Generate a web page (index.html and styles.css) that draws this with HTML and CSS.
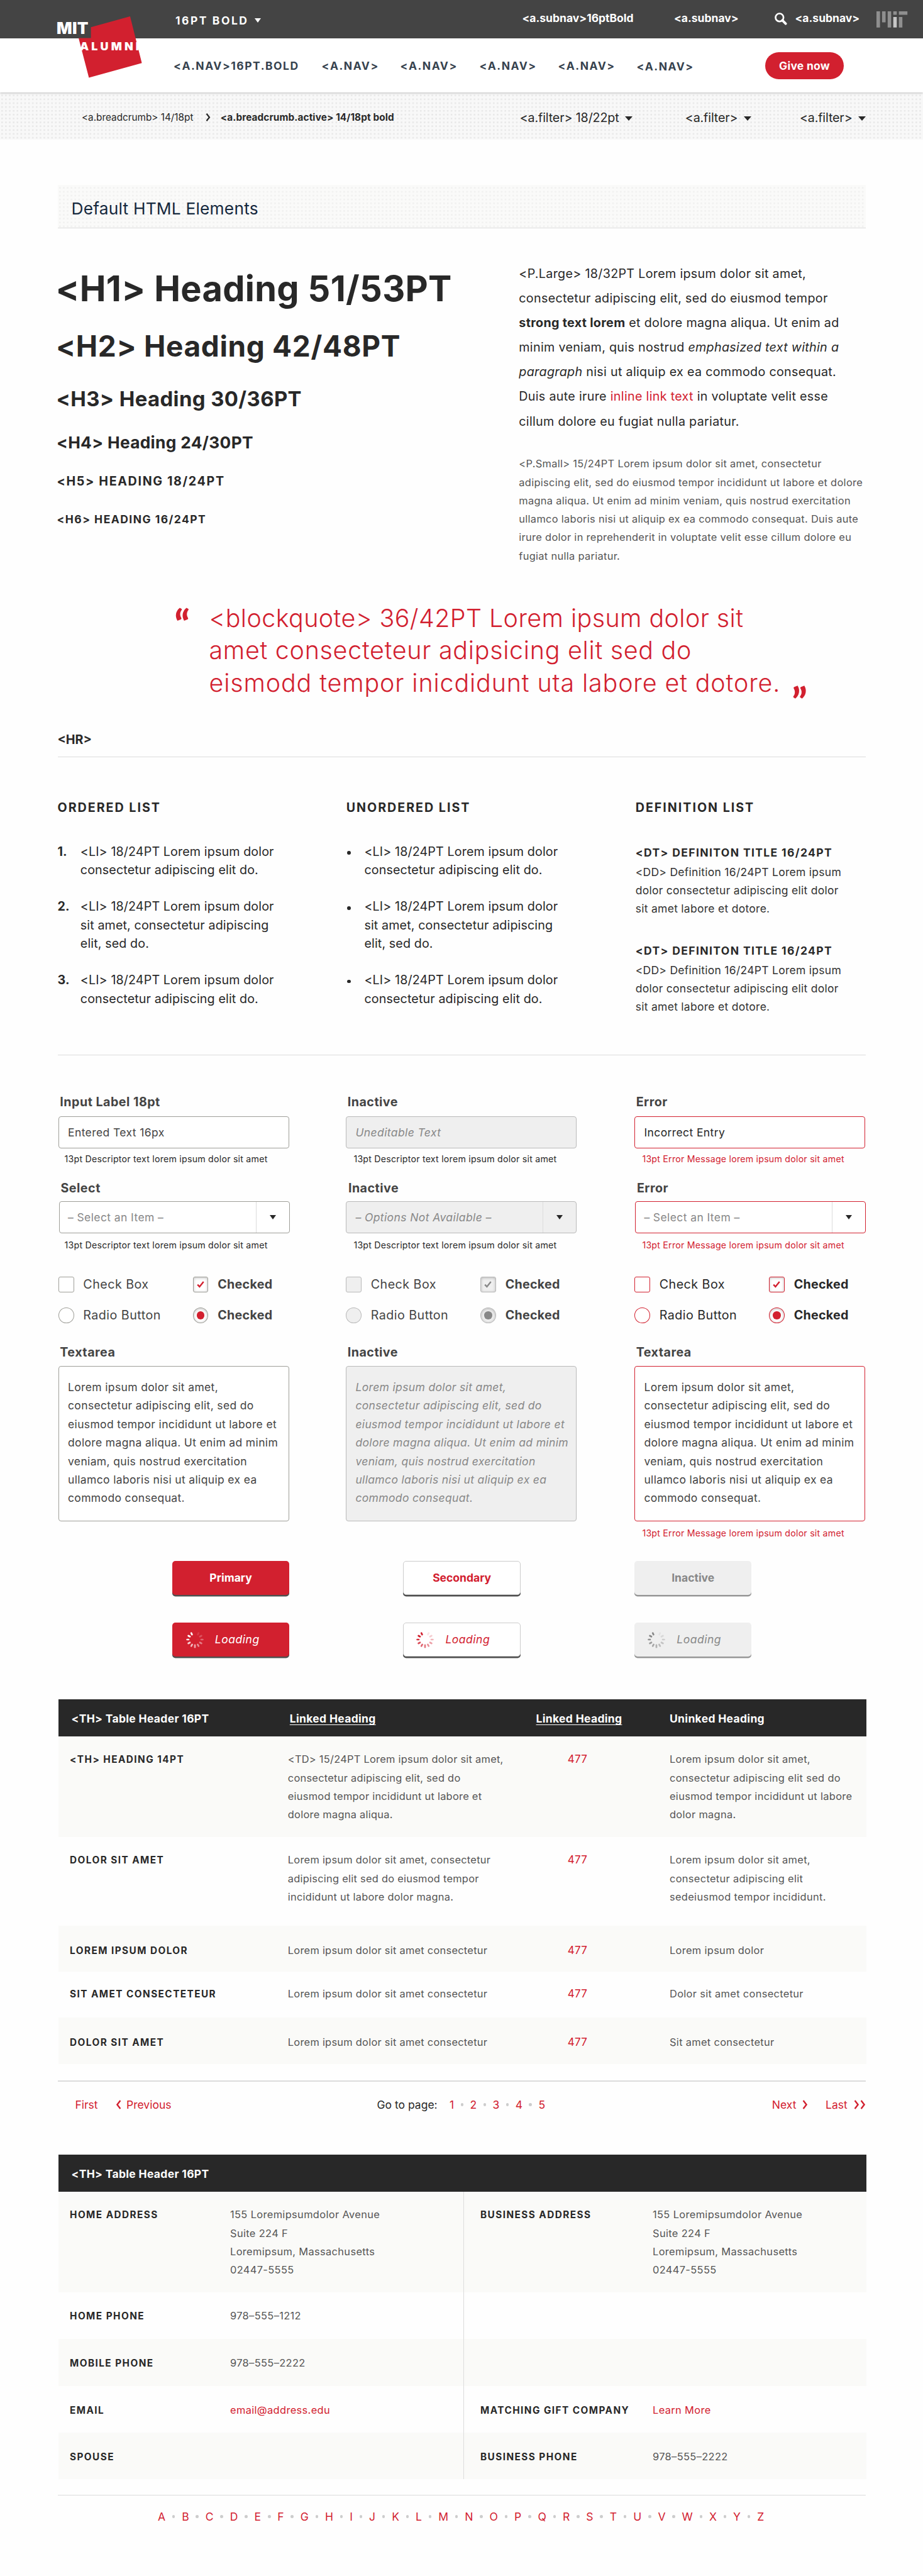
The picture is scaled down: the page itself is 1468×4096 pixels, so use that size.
FILE: index.html
```html
<!DOCTYPE html>
<html lang="en">
<head>
<meta charset="utf-8">
<title>MIT Alumni – Default HTML Elements</title>
<link rel="stylesheet" href="styles.css">
</head>
<body>
<header class="site-header">
  <div class="topbar">
    <a class="menu">16PT BOLD<i class="caret"></i></a>
    <a class="subnav">&lt;a.subnav&gt;16ptBold</a>
    <a class="subnav">&lt;a.subnav&gt;</a>
    <a class="subnav search"><svg width="20" height="20" viewBox="0 0 20 20"><circle cx="7.8" cy="7.8" r="6.3" fill="none" stroke="#fff" stroke-width="2.7"/><path d="M12.4 12.4 17.6 17.6" stroke="#fff" stroke-width="3.9" stroke-linecap="round"/></svg>&lt;a.subnav&gt;</a>
    <svg class="mit" width="50" height="26" viewBox="0 0 50 26"><g fill="#8f8f8f"><path d="M0 0h5.6v25.7H0zM8.9 0h5.6v17.6H8.9zM17.8 0h5.6v25.7h-5.6zM26.7 0h5.6v5.5h-5.6zM35.6 0h13.6v5.5H35.6zM35.6 9h5.6v16.7h-5.6z"/></g><path fill="#c6c6c6" d="M26.7 9h5.6v16.7h-5.6z"/></svg>
  </div>
  <nav class="mainnav">
    <a>&lt;A.NAV&gt;16PT.BOLD</a><a>&lt;A.NAV&gt;</a><a>&lt;A.NAV&gt;</a><a>&lt;A.NAV&gt;</a><a>&lt;A.NAV&gt;</a><a class="low">&lt;A.NAV&gt;</a>
    <a class="give">Give now</a>
  </nav>
  <svg class="logo" width="140" height="104" viewBox="90 22 140 104">
    <path fill="#d2202f" d="M206.9 26 225.6 100.2 141.4 123.4 125 60.6H144.6V43.3z"/>
    <text x="90" y="54.3" font-size="25.8" textLength="50.5">MIT</text>
    <text x="127" y="80" font-size="17.9" textLength="94">ALUMNI</text>
  </svg>
</header>
<div class="crumbs dotted">
  <a>&lt;a.breadcrumb&gt; 14/18pt</a>
  <svg class="chev" width="8" height="13" viewBox="0 0 8 13"><path d="M1.5 .8 6 6.5 1.5 12.2" fill="none" stroke="#282828" stroke-width="2.2"/></svg>
  <a class="active">&lt;a.breadcrumb.active&gt; 14/18pt bold</a>
  <a class="filter">&lt;a.filter&gt; 18/22pt<i class="caret"></i></a>
  <a class="filter">&lt;a.filter&gt;<i class="caret"></i></a>
  <a class="filter">&lt;a.filter&gt;<i class="caret"></i></a>
</div>

<main>
  <div class="section-title dotted">Default HTML Elements</div>

  <section class="intro">
    <div class="headings">
      <h1>&lt;H1&gt; Heading 51/53PT</h1>
      <h2>&lt;H2&gt; Heading 42/48PT</h2>
      <h3>&lt;H3&gt; Heading 30/36PT</h3>
      <h4>&lt;H4&gt; Heading 24/30PT</h4>
      <h5>&lt;H5&gt; HEADING 18/24PT</h5>
      <h6>&lt;H6&gt; HEADING 16/24PT</h6>
    </div>
    <div>
      <p class="large">&lt;P.Large&gt; 18/32PT Lorem ipsum dolor sit amet,<br>consectetur adipiscing elit, sed do eiusmod tempor<br><strong>strong text lorem</strong> et dolore magna aliqua. Ut enim ad<br>minim veniam, quis nostrud <em>emphasized text within a<br>paragraph</em> nisi ut aliquip ex ea commodo consequat.<br>Duis aute irure <a class="link">inline link text</a> in voluptate velit esse<br>cillum dolore eu fugiat nulla pariatur.</p>
      <p class="small">&lt;P.Small&gt; 15/24PT Lorem ipsum dolor sit amet, consectetur<br>adipiscing elit, sed do eiusmod tempor incididunt ut labore et dolore<br>magna aliqua. Ut enim ad minim veniam, quis nostrud exercitation<br>ullamco laboris nisi ut aliquip ex ea commodo consequat. Duis aute<br>irure dolor in reprehenderit in voluptate velit esse cillum dolore eu<br>fugiat nulla pariatur.</p>
    </div>
  </section>

  <blockquote><span class="q open">“</span><span class="first">&lt;blockquote&gt; 36/42PT Lorem ipsum dolor sit</span><br>amet consecteteur adipsicing elit sed do<br><span class="last">eismodd tempor inicdidunt uta labore et dotore.</span><span class="q close">”</span></blockquote>

  <div class="hr-label">&lt;HR&gt;</div>
  <hr>

  <section class="lists">
    <div>
      <h5>ORDERED LIST</h5>
      <ol>
        <li><b>1.</b><span>&lt;LI&gt; 18/24PT Lorem ipsum dolor<br>consectetur adipiscing elit do.</span></li>
        <li><b>2.</b><span>&lt;LI&gt; 18/24PT Lorem ipsum dolor<br>sit amet, consectetur adipiscing<br>elit, sed do.</span></li>
        <li><b>3.</b><span>&lt;LI&gt; 18/24PT Lorem ipsum dolor<br>consectetur adipiscing elit do.</span></li>
      </ol>
    </div>
    <div>
      <h5>UNORDERED LIST</h5>
      <ul>
        <li><i></i><span>&lt;LI&gt; 18/24PT Lorem ipsum dolor<br>consectetur adipiscing elit do.</span></li>
        <li><i></i><span>&lt;LI&gt; 18/24PT Lorem ipsum dolor<br>sit amet, consectetur adipiscing<br>elit, sed do.</span></li>
        <li><i></i><span>&lt;LI&gt; 18/24PT Lorem ipsum dolor<br>consectetur adipiscing elit do.</span></li>
      </ul>
    </div>
    <div>
      <h5>DEFINITION LIST</h5>
      <dl>
        <dt>&lt;DT&gt; DEFINITON TITLE 16/24PT</dt>
        <dd>&lt;DD&gt; Definition 16/24PT Lorem ipsum<br>dolor consectetur adipiscing elit dolor<br>sit amet labore et dotore.</dd>
        <dt>&lt;DT&gt; DEFINITON TITLE 16/24PT</dt>
        <dd>&lt;DD&gt; Definition 16/24PT Lorem ipsum<br>dolor consectetur adipiscing elit dolor<br>sit amet labore et dotore.</dd>
      </dl>
    </div>
  </section>
  <hr>

  <section class="forms">
    <div class="col">
      <label class="lbl">Input Label 18pt</label>
      <div class="field">Entered Text 16px</div>
      <p class="desc">13pt Descriptor text lorem ipsum dolor sit amet</p>
      <label class="lbl sel">Select</label>
      <div class="field select">– Select an Item –<span class="drop"><i class="caret"></i></span></div>
      <p class="desc two">13pt Descriptor text lorem ipsum dolor sit amet</p>
      <div class="opts">
        <span class="box"></span><span>Check Box</span>
        <span class="box on"><svg viewBox="0 0 24 24"><path d="M6.6 12.4 10 15.9 16.8 7.4"/></svg></span><b>Checked</b>
        <span class="box radio"></span><span>Radio Button</span>
        <span class="box radio on"></span><b>Checked</b>
      </div>
      <label class="lbl area">Textarea</label>
      <div class="textarea">Lorem ipsum dolor sit amet,<br>consectetur adipiscing elit, sed do<br>eiusmod tempor incididunt ut labore et<br>dolore magna aliqua. Ut enim ad minim<br>veniam, quis nostrud exercitation<br>ullamco laboris nisi ut aliquip ex ea<br>commodo consequat.</div>
    </div>
    <div class="col inactive">
      <label class="lbl">Inactive</label>
      <div class="field">Uneditable Text</div>
      <p class="desc">13pt Descriptor text lorem ipsum dolor sit amet</p>
      <label class="lbl sel">Inactive</label>
      <div class="field select">– Options Not Available –<span class="drop"><i class="caret"></i></span></div>
      <p class="desc two">13pt Descriptor text lorem ipsum dolor sit amet</p>
      <div class="opts">
        <span class="box"></span><span>Check Box</span>
        <span class="box on"><svg viewBox="0 0 24 24"><path d="M6.6 12.4 10 15.9 16.8 7.4"/></svg></span><b>Checked</b>
        <span class="box radio"></span><span>Radio Button</span>
        <span class="box radio on"></span><b>Checked</b>
      </div>
      <label class="lbl area">Inactive</label>
      <div class="textarea">Lorem ipsum dolor sit amet,<br>consectetur adipiscing elit, sed do<br>eiusmod tempor incididunt ut labore et<br>dolore magna aliqua. Ut enim ad minim<br>veniam, quis nostrud exercitation<br>ullamco laboris nisi ut aliquip ex ea<br>commodo consequat.</div>
    </div>
    <div class="col error">
      <label class="lbl">Error</label>
      <div class="field">Incorrect Entry</div>
      <p class="desc">13pt Error Message lorem ipsum dolor sit amet</p>
      <label class="lbl sel">Error</label>
      <div class="field select">– Select an Item –<span class="drop"><i class="caret"></i></span></div>
      <p class="desc two">13pt Error Message lorem ipsum dolor sit amet</p>
      <div class="opts">
        <span class="box"></span><span>Check Box</span>
        <span class="box on"><svg viewBox="0 0 24 24"><path d="M6.6 12.4 10 15.9 16.8 7.4"/></svg></span><b>Checked</b>
        <span class="box radio"></span><span>Radio Button</span>
        <span class="box radio on"></span><b>Checked</b>
      </div>
      <label class="lbl area">Textarea</label>
      <div class="textarea">Lorem ipsum dolor sit amet,<br>consectetur adipiscing elit, sed do<br>eiusmod tempor incididunt ut labore et<br>dolore magna aliqua. Ut enim ad minim<br>veniam, quis nostrud exercitation<br>ullamco laboris nisi ut aliquip ex ea<br>commodo consequat.</div>
      <p class="desc three">13pt Error Message lorem ipsum dolor sit amet</p>
    </div>
  </section>

  <svg class="defs" width="0" height="0"><defs><g id="spin" stroke-width="2.7" stroke-linecap="round" fill="none">
    <path opacity=".12" d="M19.8 3.6 18.6 6.1"/><path opacity=".22" d="M24.4 8 22 9.3"/><path opacity=".32" d="M26.4 14H24"/><path opacity=".42" d="M24.4 20 22 18.7"/><path opacity=".5" d="M19.8 24.4 18.4 21.9"/><path opacity=".6" d="M14 26.2V22.8"/><path opacity=".7" d="M8.2 24.4 9.6 21.9"/><path opacity=".8" d="M3.6 20 6 18.7"/><path opacity=".9" d="M1.6 14H4"/><path d="M3.6 8 6 9.3"/><path d="M8.2 3.6 9.4 6.1"/>
  </g></defs></svg>
  <section class="buttons">
    <a class="btn primary">Primary</a><a class="btn secondary">Secondary</a><a class="btn off">Inactive</a>
    <a class="btn primary loading"><svg width="28" height="28" viewBox="0 0 28 28"><use href="#spin"/></svg>Loading</a>
    <a class="btn secondary loading"><svg width="28" height="28" viewBox="0 0 28 28"><use href="#spin"/></svg>Loading</a>
    <a class="btn off loading"><svg width="28" height="28" viewBox="0 0 28 28"><use href="#spin"/></svg>Loading</a>
  </section>

  <table class="data">
    <colgroup><col class="c1"><col class="c2"><col class="c3"><col class="c4"></colgroup>
    <thead><tr><th>&lt;TH&gt; Table Header 16PT</th><th><u>Linked Heading</u></th><th><u>Linked Heading</u></th><th>Uninked Heading</th></tr></thead>
    <tbody>
      <tr><th>&lt;TH&gt; HEADING 14PT</th><td>&lt;TD&gt; 15/24PT Lorem ipsum dolor sit amet,<br>consectetur adipiscing elit, sed do<br>eiusmod tempor incididunt ut labore et<br>dolore magna aliqua.</td><td><a class="link">477</a></td><td>Lorem ipsum dolor sit amet,<br>consectetur adipiscing elit sed do<br>eiusmod tempor incididunt ut labore<br>dolor magna.</td></tr>
      <tr><th>DOLOR SIT AMET</th><td>Lorem ipsum dolor sit amet, consectetur<br>adipiscing elit sed do eiusmod tempor<br>incididunt ut labore dolor magna.</td><td><a class="link">477</a></td><td>Lorem ipsum dolor sit amet,<br>consectetur adipiscing elit<br>sedeiusmod tempor incididunt.</td></tr>
      <tr><th>LOREM IPSUM DOLOR</th><td>Lorem ipsum dolor sit amet consectetur</td><td><a class="link">477</a></td><td>Lorem ipsum dolor</td></tr>
      <tr><th>SIT AMET CONSECTETEUR</th><td>Lorem ipsum dolor sit amet consectetur</td><td><a class="link">477</a></td><td>Dolor sit amet consectetur</td></tr>
      <tr><th>DOLOR SIT AMET</th><td>Lorem ipsum dolor sit amet consectetur</td><td><a class="link">477</a></td><td>Sit amet consectetur</td></tr>
    </tbody>
  </table>
  <hr class="pager-rule">
  <div class="pager">
    <div class="prev"><a>First</a><a><svg width="9" height="15" viewBox="0 0 9 15"><path d="M7.4 1 2.4 7.5 7.4 14"/></svg>Previous</a></div>
    <div class="pages"><span>Go to page:</span><a>1</a><i></i><a>2</a><i></i><a>3</a><i></i><a>4</a><i></i><a>5</a></div>
    <div class="next"><a>Next<svg width="9" height="15" viewBox="0 0 9 15"><path d="M1.6 1 6.6 7.5 1.6 14"/></svg></a><a>Last<svg width="19" height="15" viewBox="0 0 19 15"><path d="M1.6 1 6.6 7.5 1.6 14M11.6 1 16.6 7.5 11.6 14"/></svg></a></div>
  </div>

  <table class="profile">
    <colgroup><col class="p1"><col class="p2"><col class="p3"><col class="p4"></colgroup>
    <thead><tr><th colspan="4">&lt;TH&gt; Table Header 16PT</th></tr></thead>
    <tbody>
      <tr><th>HOME ADDRESS</th><td>155 Loremipsumdolor Avenue<br>Suite 224 F<br>Loremipsum, Massachusetts<br>02447-5555</td><th>BUSINESS ADDRESS</th><td>155 Loremipsumdolor Avenue<br>Suite 224 F<br>Loremipsum, Massachusetts<br>02447-5555</td></tr>
      <tr><th>HOME PHONE</th><td>978–555–1212</td><th></th><td></td></tr>
      <tr><th>MOBILE PHONE</th><td>978–555–2222</td><th></th><td></td></tr>
      <tr><th>EMAIL</th><td><a class="link">email@address.edu</a></td><th>MATCHING GIFT COMPANY</th><td><a class="link">Learn More</a></td></tr>
      <tr><th>SPOUSE</th><td></td><th>BUSINESS PHONE</th><td>978–555–2222</td></tr>
    </tbody>
  </table>
  <hr class="letters-rule">
  <div class="letters"><a>A</a><i></i><a>B</a><i></i><a>C</a><i></i><a>D</a><i></i><a>E</a><i></i><a>F</a><i></i><a>G</a><i></i><a>H</a><i></i><a>I</a><i></i><a>J</a><i></i><a>K</a><i></i><a>L</a><i></i><a>M</a><i></i><a>N</a><i></i><a>O</a><i></i><a>P</a><i></i><a>Q</a><i></i><a>R</a><i></i><a>S</a><i></i><a>T</a><i></i><a>U</a><i></i><a>V</a><i></i><a>W</a><i></i><a>X</a><i></i><a>Y</a><i></i><a>Z</a></div>
</main>
</body>
</html>
```
FILE: styles.css
```css
* { box-sizing: border-box; }
body { margin: 0; width: 1468px; height: 4096px; background: #fefefe; color: #282828; font-family: Inter, "Open Sans", sans-serif; }
h1, h2, h3, h4, h5, h6, p, ol, ul, dl, dd, blockquote { margin: 0; padding: 0; }
ol, ul { list-style: none; }
.link { color: #d2202f; }
.caret { display: inline-block; width: 0; height: 0; border: 5.8px solid transparent; border-top: 7px solid currentColor; border-bottom: 0; }

/* Header */
.site-header { position: relative; height: 146.8px; background: #fff; box-shadow: 0 1px 3px rgba(0, 0, 0, .25); }
.topbar { height: 61.2px; padding-left: 279px; background: #444; color: #fff; display: grid; grid-template-columns: 551.4px 241.5px 160.6px 161.5px 60px; align-items: start; font-size: 17.5px; font-weight: 700; line-height: 24px; }
.menu { margin-top: 20.7px; letter-spacing: .145em; }
.menu .caret { margin-left: 9px; vertical-align: 3px; }
.subnav { margin-top: 17.2px; white-space: nowrap; }
.search { display: flex; }
.search svg { margin: 2.4px 12px 0 0; flex: none; }
.mit { margin-top: 18.3px; }
.mainnav { height: 85.6px; padding-left: 276px; display: grid; grid-template-columns: 235.5px 125px 125.9px 125px 125px 204.6px 125px; align-items: start; font-size: 17.5px; font-weight: 700; line-height: 24px; letter-spacing: .086em; color: #36424e; }
.mainnav a { margin-top: 31.6px; }
.mainnav .low { margin-top: 33px; }
.mainnav .give { margin-top: 21.9px; height: 43px; line-height: 43px; border-radius: 22px; background: #d2202f; color: #fff; text-align: center; letter-spacing: .015em; }
.logo { position: absolute; left: 90px; top: 22px; font-weight: 900; fill: #fff; }
.dotted { --bg: #f8f8f8; --dot: #e9e9e9; background-color: var(--bg);
  background-image: linear-gradient(90deg, transparent 0 2.4px, var(--bg) 2.4px), linear-gradient(var(--bg) 0 3.6px, var(--dot) 3.6px 6px, var(--bg) 6px);
  background-size: 6.117px 6.117px; background-position: 2px 0; }
.crumbs { height: 75.6px; padding-left: 130px; display: grid; grid-template-columns: 195.7px 25px 476px 263.1px 182.1px 150px; align-items: start; font-size: 15.3px; line-height: 24px; }
.crumbs a { margin-top: 27.8px; white-space: nowrap; }
.crumbs .chev { margin: 33.4px 0 0 1px; }
.crumbs .active { font-weight: 700; letter-spacing: .008em; }
.crumbs .filter { margin-top: 28.5px; font-size: 19.7px; letter-spacing: -.007em; }
.filter .caret { margin-left: 9.5px; vertical-align: 2px; border-width: 7.6px 6.1px 0; }

main { margin-left: 91.5px; width: 1285.3px; }
.section-title { --bg: #fafaf9; --dot: #f1f1f0; margin-top: 72px; height: 68.6px; padding: 17.2px 0 0 22px; border-bottom: 1.5px solid #dcdcdc; font-size: 26.3px; line-height: 40px; letter-spacing: .008em; color: #15283d; }

/* Type samples */
.intro { margin-top: 52.7px; display: grid; grid-template-columns: 733.8px 1fr; }
h1, h2, h3, h4, h5, h6 { font-weight: 700; white-space: nowrap; }
.headings { padding-top: 11.2px; }
h1 { font-size: 55.9px; line-height: 64.8px; margin-left: -3px; letter-spacing: .006em; }
h2 { font-size: 46px; line-height: 58.7px; margin: 29.8px 0 0 -2.5px; letter-spacing: .014em; }
h3 { font-size: 32.9px; line-height: 44px; margin: 31.7px 0 0 -2px; letter-spacing: .012em; }
h4 { font-size: 26.3px; line-height: 36.7px; margin: 30.6px 0 0 -1.5px; letter-spacing: .012em; }
h5 { font-size: 19.7px; line-height: 29.35px; letter-spacing: .083em; }
.headings h5 { margin: 28px 0 0 -1px; }
h6 { font-size: 17.5px; line-height: 29.35px; margin: 30.1px 0 0 -1px; letter-spacing: .083em; }
.large { font-size: 19.7px; line-height: 39.15px; letter-spacing: .016em; white-space: nowrap; }
.small { margin-top: 33.5px; font-size: 16.4px; line-height: 29.3px; letter-spacing: .019em; color: #555; white-space: nowrap; }
blockquote { position: relative; margin: 59px 0 0 241px; font-size: 39.4px; line-height: 51.4px; font-weight: 300; letter-spacing: .0185em; color: #d2202f; white-space: nowrap; }
.first { letter-spacing: .011em; }
.last { letter-spacing: .0225em; }
.q { position: absolute; font-family: Lato, sans-serif; font-size: 62px; line-height: 56px; font-weight: 900; letter-spacing: 0; }
.open { left: -55px; top: 5.9px; }
.close { left: 926.7px; top: 129px; }
.hr-label { margin: 49.9px 0 11.8px; font-size: 19.7px; line-height: 29.3px; font-weight: 700; }
hr { margin: 0; border: 0; height: 1.2px; background: #dcdcdc; }

/* Lists */
.lists { display: grid; grid-template-columns: 459.2px 460px 1fr; padding: 65.7px 0 61.7px; }
.lists h5 { letter-spacing: .1em; }
.lists ol, .lists ul { margin-top: 40.4px; display: grid; gap: 28.8px; font-size: 19.7px; line-height: 29.35px; letter-spacing: .006em; white-space: nowrap; align-content: start; }
.lists li { display: flex; }
.lists li b { width: 36.3px; }
.lists ul i { width: 5.8px; height: 5.8px; margin: 13.5px 21.4px 0 1.6px; border-radius: 50%; background: #282828; }
dl { margin-top: 41.2px; font-size: 17.5px; white-space: nowrap; }
dt { font-weight: 700; line-height: 29.3px; letter-spacing: .079em; }
dd { margin-top: 1.6px; line-height: 29.2px; letter-spacing: .016em; color: #333; }
dd + dt { margin-top: 37.8px; }

/* Forms */
.forms { margin: 60px -4px 0 1.5px; display: grid; grid-template-columns: 457.4px 459px 367px; }
.col { --line: #9e9e98; --fill: #fff; --mark: #d2202f; display: flex; flex-direction: column; width: 367px; color: #444; min-height: 708px; }
.inactive { --line: #b9b9b9; --fill: #efefef; --mark: #888; }
.error { --line: #d2202f; }
.lbl { margin-left: 2.3px; font-size: 19.7px; line-height: 29.3px; font-weight: 700; letter-spacing: .024em; }
.field { margin-top: 7.1px; height: 51.4px; padding-left: 14px; border: 1.3px solid var(--line); border-radius: 4px; background: var(--fill); display: flex; align-items: center; font-size: 17.5px; letter-spacing: .023em; }
.inactive .field, .inactive .textarea { font-style: italic; color: #888; }
.error .field, .error .opts { color: #282828; }
.desc { margin: 7.4px 0 0 9.5px; font-size: 14.2px; line-height: 18px; letter-spacing: .0157em; color: #282828; white-space: nowrap; }
.inactive .desc, .error .desc { margin-left: 12px; }
.error .desc { color: #d2202f; }
.sel { margin: 23px 0 0 3.5px; }
.select { margin: 5.8px -1px 0 1px; height: 51.2px; padding-left: 13px; color: #888; }
.error .select { color: #888; }
.inactive .select { margin: 6.6px 0 0; padding-left: 14px; height: 51px; }
.drop { margin-left: auto; align-self: stretch; width: 53px; border-left: 1.2px solid #dcdcdc; display: flex; align-items: center; justify-content: center; color: #282828; }
.desc.two { margin-top: 9.8px; }
.inactive .desc.two { margin-top: 9.2px; }
.opts { margin-top: 41.6px; display: grid; grid-template-columns: 39.3px 174.7px 39.3px 1fr; grid-auto-rows: 24.6px; row-gap: 24.6px; align-items: center; font-size: 19.7px; line-height: 24.6px; letter-spacing: .0235em; }
.opts b { letter-spacing: .013em; }
.box { width: 24.5px; height: 24.6px; border: 1.3px solid var(--line); border-radius: 3px; background: var(--fill); }
.box.on { box-shadow: inset 0 1px 4px rgba(0, 0, 0, .25); }
.box svg { display: block; width: 22.5px; height: 22.5px; fill: none; stroke: var(--mark); stroke-width: 2.6; }
.radio { border-radius: 50%; display: grid; place-items: center; }
.radio.on::after { content: ""; width: 12.4px; height: 12.4px; border-radius: 50%; background: var(--mark); }
.area { margin-top: 32.1px; }
.textarea { margin-top: 7.1px; height: 246.8px; padding: 17.6px 0 0 14px; border: 1.3px solid var(--line); border-radius: 4px; background: var(--fill); font-size: 17.5px; line-height: 29.4px; letter-spacing: .02em; white-space: nowrap; }
.desc.three { margin-top: 9.3px; }

/* Buttons */
.defs { position: absolute; }
.buttons { margin: 35.4px 0 0 182.4px; display: grid; grid-template-columns: repeat(3, 186.3px); column-gap: 181.3px; row-gap: 44.2px; }
.btn { height: 53.8px; border-radius: 5px; display: flex; align-items: center; justify-content: center; font-size: 17.5px; font-weight: 700; box-shadow: 0 2.4px 0 #4f4f4f; }
.primary { background: #d2202f; color: #fff; stroke: #fff; }
.secondary { background: #fff; color: #d2202f; stroke: #d2202f; border: 1.3px solid #ccc; }
.off { background: #efefef; color: #888; stroke: #888; box-shadow: 0 2.4px 0 #969696; }
.loading { justify-content: flex-start; padding-left: 21.9px; gap: 18px; font-style: italic; font-weight: 400; letter-spacing: .03em; }
.secondary.loading { padding-left: 19.9px; }
.off.loading { padding-left: 21.2px; }

/* Tables */
table { margin-left: 1.5px; width: 1284.7px; table-layout: fixed; border-collapse: collapse; white-space: nowrap; }
th, td { padding: 22.5px 0 0; text-align: left; vertical-align: top; }
thead th { height: 59px; padding: 2px 0 0 20.5px; vertical-align: middle; background: #282828; color: #fff; font-size: 17.5px; font-weight: 700; letter-spacing: .018em; }
u { text-underline-offset: 2.5px; text-decoration-thickness: 1.3px; text-decoration-skip-ink: none; }
tbody th { padding-left: 18px; font-size: 15.3px; line-height: 29.4px; letter-spacing: .095em; }
tbody td { font-size: 16.4px; line-height: 29.4px; letter-spacing: .02em; color: #555; }
tbody tr:nth-child(odd) { background: #fafaf8; }
.data { margin-top: 68px; }
.c1 { width: 364.8px; } .c2 { width: 362.2px; } .c3 { width: 197px; } .c4 { width: 360.7px; }
.data td:nth-child(2) { letter-spacing: .016em; }
.data thead th:nth-child(2) { padding-left: 3px; }
.data th:nth-child(3), .data td:nth-child(3) { text-align: center; padding-left: 0; }
.data td:nth-child(3) { font-size: 17px; }
.data thead th:nth-child(3) { padding-left: 5px; }
.data thead th:nth-child(4), .data td:nth-child(4) { padding-left: 48px; }
.data tbody tr { height: 73.4px; }
.data tbody tr:nth-child(1) { height: 160px; }
.data tbody tr:nth-child(2) { height: 141px; }
.data tr:nth-child(3) > * { padding-top: 25.5px; }
.data tbody tr:nth-child(4) > * { padding-top: 21px; }
.data tr:nth-child(5) > * { padding-top: 24.5px; }
.pager-rule { margin-top: 26.5px; }
.pager { margin-top: 25.2px; height: 24px; display: grid; grid-template-columns: 508px 628.3px 1fr; font-size: 17.5px; line-height: 24px; color: #d2202f; white-space: nowrap; }
.pager div, .pager a { display: flex; align-items: center; }
.pager svg { fill: none; stroke: #d2202f; stroke-width: 2.4; }
.prev { padding-left: 27.9px; gap: 28.5px; }
.prev a { gap: 8px; }
.pages { gap: 10.4px; }
.pages span { margin-right: 9px; color: #282828; }
.pager i, .letters i { width: 4.6px; height: 4.6px; border-radius: 50%; background: #ccc; }
.next { justify-content: space-between; }
.next a { gap: 10px; }

.profile { margin-top: 67.5px; }
.profile thead th { height: 58.5px; }
.p1 { width: 273px; } .p2 { width: 371px; } .p3 { width: 301px; } .p4 { width: 339.7px; }
.profile td:nth-child(2) { border-right: 1.3px solid #dcdcdc; }
.profile th:nth-child(3) { padding-left: 26.5px; }
.profile td { letter-spacing: .022em; }
.profile tbody tr { height: 74.2px; }
.profile tbody tr:nth-child(1) { height: 160.5px; }
.profile tbody tr:nth-child(n+3) > * { padding-top: 24px; }
.letters-rule { margin-top: 24.5px; }
.letters { margin: 22px 0 0 159.5px; width: 964.5px; display: flex; justify-content: space-between; align-items: center; font-size: 17.5px; line-height: 24px; color: #d2202f; }
```
